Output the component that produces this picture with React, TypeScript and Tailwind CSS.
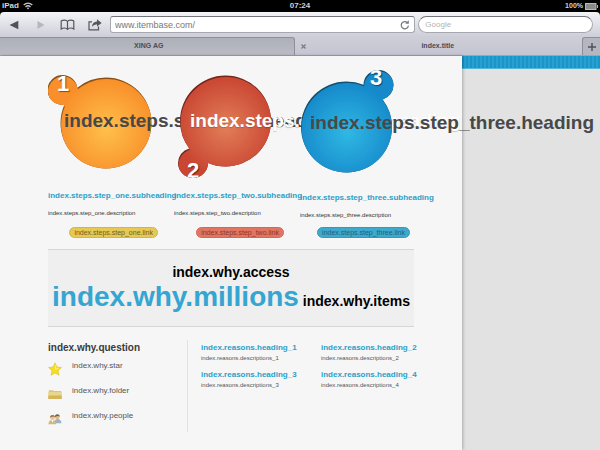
import React from "react";

type Circle = { x: number; y: number; r: number };

type Step = {
  id: string;
  number: string;
  big: Circle;
  small: Circle;
  label: { x: number; y: number };
  height: number;
  colors: { inner: string; outer: string; edge: string };
  headingClass: string;
  linkClass: string;
};

const steps: Step[] = [
  {
    id: "one",
    number: "1",
    big: { x: 58, y: 57, r: 45.5 },
    small: { x: 14.5, y: 24, r: 15 },
    label: { x: 9, y: 25 },
    height: 112,
    colors: { inner: "#ffc04c", outer: "#f88f29", edge: "#8a5016" },
    headingClass: "left-4 top-[43px] text-[#484848]",
    linkClass: "bg-[#e6c853] text-[#70601f] border-[#d5b640]",
  },
  {
    id: "two",
    number: "2",
    big: { x: 51.5, y: 55, r: 45.5 },
    small: { x: 19, y: 97, r: 15 },
    label: { x: 13, y: 112 },
    height: 112,
    colors: { inner: "#e27e58", outer: "#c94632", edge: "#74261c" },
    headingClass: "left-4 top-[43px] text-white [text-shadow:0_1px_1px_#00000030]",
    linkClass: "bg-[#e27562] text-[#8b3529] border-[#d96651]",
  },
  {
    id: "three",
    number: "3",
    big: { x: 46.5, y: 61, r: 45.5 },
    small: { x: 78.5, y: 19, r: 15 },
    label: { x: 70, y: 19 },
    height: 114,
    colors: { inner: "#30b8e4", outer: "#1689ca", edge: "#12506f" },
    headingClass: "left-2.5 top-[45px] text-[#484848]",
    linkClass: "bg-[#3da9cc] text-[#1d6180] border-[#2f9bbf]",
  },
];

const reasons = [1, 2, 3, 4];

function Blob({ step }: { step: Step }) {
  const { big, small, colors } = step;
  const shape = (
    <>
      <circle cx={big.x} cy={big.y} r={big.r} />
      <circle cx={small.x} cy={small.y} r={small.r} />
    </>
  );
  return (
    <svg width="126" height={step.height} className="block" aria-hidden="true">
      <defs>
        <radialGradient
          id={`fill-${step.id}`}
          gradientUnits="userSpaceOnUse"
          cx={big.x}
          cy={big.y + 4}
          r="50"
        >
          <stop offset="0" stopColor={colors.inner} />
          <stop offset="1" stopColor={colors.outer} />
        </radialGradient>
        <clipPath id={`clip-${step.id}`}>{shape}</clipPath>
        <filter id={`soft-${step.id}`}>
          <feGaussianBlur stdDeviation="0.7" />
        </filter>
      </defs>
      <g clipPath={`url(#clip-${step.id})`}>
        <rect width="126" height="116" fill={colors.edge} />
        <g
          fill={`url(#fill-${step.id})`}
          transform="translate(0.6 1.6)"
          filter={`url(#soft-${step.id})`}
        >
          {shape}
        </g>
        <text
          x={step.label.x}
          y={step.label.y}
          fill="#ffffff"
          className="text-[22px] font-bold [text-shadow:1px_1px_1px_#00000077]"
        >
          {step.number}
        </text>
      </g>
    </svg>
  );
}

function StepColumn({ step }: { step: Step }) {
  const name = `index.steps.step_${step.id}`;
  return (
    <li className="relative flex flex-col whitespace-nowrap">
      <Blob step={step} />
      <h2 className={`absolute text-[19px] leading-6 font-bold ${step.headingClass}`}>
        {name}.heading
      </h2>
      <h3 className="mt-3 w-0 text-[8px] leading-3 font-bold text-[#2ba0c8]">
        {name}.subheading
      </h3>
      <p className="mt-[7px] w-0 text-[6px] leading-[8px] text-[#333]">{name}.description</p>
      <a
        href="#"
        className={`mt-auto mr-4 self-end rounded-md border px-1 text-[7px] leading-[9px] ${step.linkClass}`}
      >
        {name}.link
      </a>
    </li>
  );
}

function StarIcon() {
  return (
    <svg width="14" height="14" viewBox="0 0 14 14" aria-hidden="true">
      <path
        d="M7 .8 8.9 5l4.6.5-3.4 3.1.9 4.6L7 10.9 3 13.2l.9-4.6L.5 5.5 5.1 5Z"
        fill="#f6dd20"
        stroke="#e3c63a"
        strokeWidth=".7"
      />
      <path d="M7 2.5 8.2 5.8l3 .4L7 8Z" fill="#fff06a" />
    </svg>
  );
}

function FolderIcon() {
  return (
    <svg width="14" height="14" viewBox="0 0 14 14" aria-hidden="true">
      <path d="M.8 4V3.2h4l1 .8h7.4v8H.8Z" fill="#dcc475" />
      <path d="M.3 5h13.4v7H.3Z" fill="#e8d68c" />
      <path d="M.3 8.5h13.4V12H.3Z" fill="#d5b557" />
    </svg>
  );
}

function PeopleIcon() {
  return (
    <svg width="14" height="14" viewBox="0 0 15 14" aria-hidden="true">
      <path d="M6.5 11.5Q7 6.8 10.2 7q3.6 0 4.3 4.5Z" fill="#9bb2c4" />
      <circle cx="10" cy="4.8" r="2.4" fill="#e0b78e" />
      <path d="M7.5 4.8Q7.4 2 10 2q2.7 0 2.5 2.7L10.6 3.6Z" fill="#765b3f" />
      <path d="M.5 12.5Q.7 8 4.5 8t4.3 4.5Z" fill="#d4b878" />
      <circle cx="4.8" cy="5.6" r="2.5" fill="#e8c69c" />
      <path d="M2.2 5.4Q2.1 2.8 4.9 2.7q2.7.1 2.6 2.7L5.7 4.3Z" fill="#987046" />
      <path d="m3.7 8.2 1 2.9 1.2-2.9Z" fill="#fff" />
    </svg>
  );
}

const whyItems = [
  { name: "star", Icon: StarIcon },
  { name: "folder", Icon: FolderIcon },
  { name: "people", Icon: PeopleIcon },
];

function StatusBar() {
  return (
    <div className="grid h-3 grid-cols-3 items-center bg-black px-0.5 text-[8px] leading-3 font-bold text-[#d4d4d4]">
      <div className="flex items-center gap-1">
        <span>iPad</span>
        <svg width="10" height="8" viewBox="0 0 10 8" fill="none" stroke="#c8c8c8" strokeWidth="1.3" aria-label="Wi-Fi">
          <path d="M.7 3.1Q5-.8 9.3 3.1M2.5 4.9Q5 2.7 7.5 4.9" />
          <path d="m3.8 6 1.2 1.5L6.2 6Q5 5.2 3.8 6Z" fill="#c8c8c8" stroke="none" />
        </svg>
      </div>
      <span className="text-center">07:24</span>
      <div className="flex items-center justify-end gap-0.5 text-[7px]">
        <span>100%</span>
        <svg width="13" height="7" viewBox="0 0 13 7" aria-label="Battery full">
          <rect x=".5" y=".5" width="10.5" height="6" fill="#8b8b8b" stroke="#b8b8b8" />
          <path d="M12 2h1v3h-1Z" fill="#b8b8b8" />
        </svg>
      </div>
    </div>
  );
}

function Toolbar() {
  return (
    <div className="flex h-[25px] items-center rounded-t bg-linear-to-b from-[#f4f4f7] to-[#cdced8] pr-[7px] pl-[9px]">
      <div className="flex w-[101px] items-center">
        <button type="button" aria-label="Back" className="mr-[18px]">
          <svg width="10" height="10" viewBox="0 0 10 10" className="block">
            <path d="M9.3.8v8.4L.5 5Z" fill="#505259" />
          </svg>
        </button>
        <button type="button" aria-label="Forward" className="mr-[15px]">
          <svg width="8" height="10" viewBox="0 0 8 10" className="block">
            <path d="M.5 1v8l7-4Z" fill="#b6b7be" />
          </svg>
        </button>
        <button type="button" aria-label="Bookmarks" className="mr-[13px]">
          <svg width="15" height="12" viewBox="0 0 15 12" className="block" fill="none" stroke="#54565e" strokeWidth="1.2">
            <path d="M7.5 2.5Q6.8 1.1 4.5 1.1T1.2 2v8Q2.6 9 4.5 9t3 1.3Q8.5 9 10.5 9t3.3 1V2Q12.8 1.1 10.5 1.1T7.5 2.5Zm0 0v8" />
          </svg>
        </button>
        <button type="button" aria-label="Share">
          <svg width="14" height="12" viewBox="0 0 14 12" className="block" fill="none" stroke="#54565e" strokeWidth="1.2">
            <path d="M4 2.8H1v8h9.5V7.5" />
            <path d="M4 7.8q.3-5 5-5.2V.3L13.6 4 9 7.5V5.2Q5.8 5.2 4 7.8Z" fill="#54565e" stroke="none" />
          </svg>
        </button>
      </div>
      <div className="flex h-[17px] flex-[307] items-center rounded-[3px] border border-[#a6a7af] border-t-[#73747b] bg-white px-1">
        <input
          aria-label="Address"
          defaultValue="www.itembase.com/"
          className="min-w-0 flex-1 bg-transparent text-[9px] leading-3 text-[#777] outline-none"
        />
        <button type="button" aria-label="Reload">
          <svg width="10" height="10" viewBox="0 0 10 10" className="block" fill="none" stroke="#777981" strokeWidth="1.2">
            <path d="M8.4 5.6A3.6 3.6 0 1 1 7.2 2.5" />
            <path d="M5.2 3.7h3.6V.3Z" fill="#777981" stroke="none" />
          </svg>
        </button>
      </div>
      <input
        type="search"
        aria-label="Search"
        placeholder="Google"
        className="ml-[3px] h-[17px] min-w-0 flex-[167] rounded-full border border-[#a6a7af] border-t-[#73747b] bg-white px-1.5 text-[8px] leading-3 outline-none placeholder:text-[#b3b3b3]"
      />
    </div>
  );
}

function TabBar() {
  return (
    <div className="flex h-[19px] border-b border-[#a2a4ad] bg-linear-to-b from-[#cdced8] to-[#c4c5d0] text-[7px] font-bold text-[#484b55]">
      <button
        type="button"
        className="flex-[290] rounded-tr-[3px] border-t border-r border-[#8e9099] bg-linear-to-b from-[#adb0b9] to-[#babcc5] pl-1"
      >
        XING AG
      </button>
      <div className="flex flex-[288] items-center">
        <button type="button" aria-label="Close tab" className="ml-1.5">
          <svg width="5" height="5" viewBox="0 0 5 5" className="block" stroke="#777a86" strokeWidth="1.2">
            <path d="m.5.5 4 4m0-4-4 4" />
          </svg>
        </button>
        <button type="button" className="mr-3 flex-1">
          index.title
        </button>
      </div>
      <button
        type="button"
        aria-label="New tab"
        className="flex w-[18px] items-center justify-center rounded-tl-[3px] border-t border-l border-[#8e9099] bg-[#b4b6c0]"
      >
        <svg width="8" height="8" viewBox="0 0 8 8" stroke="#50525b" strokeWidth="1.5">
          <path d="M4 0v8M0 4h8" />
        </svg>
      </button>
    </div>
  );
}

export default function App() {
  return (
    <div className="flex min-h-screen flex-col overflow-hidden bg-black font-['Liberation_Sans',Arial,sans-serif]">
      <header>
        <StatusBar />
        <Toolbar />
        <TabBar />
      </header>
      <div className="flex flex-1 bg-[#e2e2e2]">
        <main className="relative z-10 w-[77%] bg-[#f6f6f6] px-12 pt-2.5 pb-4 shadow-[1px_0_3px_#00000040]">
          <ul className="-mr-3 grid h-[172px] grid-cols-3">
            {steps.map((step) => (
              <StepColumn key={step.id} step={step} />
            ))}
          </ul>

          <section className="mt-[11px] border-y border-[#d6d6d6] bg-[#efefef] pt-3.5 pb-2 text-center text-[14px] font-bold whitespace-nowrap text-black">
            <p className="leading-4">index.why.access</p>
            <p className="leading-[34px]">
              <strong className="text-[28px] text-[#35a5d2]">index.why.millions</strong>{" "}
              index.why.items
            </p>
          </section>

          <div className="mt-[13px] flex whitespace-nowrap">
            <section className="h-[92px] w-[140px] border-r border-[#e2e2e2]">
              <h2 className="pt-0.5 text-[10px] leading-3 font-bold text-[#3b3b3b]">
                index.why.question
              </h2>
              <ul className="mt-1.5 flex flex-col gap-[9px]">
                {whyItems.map(({ name, Icon }) => (
                  <li key={name} className="flex h-4 items-end gap-2.5">
                    <Icon />
                    <span className="self-start text-[8px] leading-3 text-[#555]">
                      index.why.{name}
                    </span>
                  </li>
                ))}
              </ul>
            </section>
            <ul className="grid flex-1 grid-cols-2 content-start gap-x-[27px] gap-y-[7px] pt-0.5 pl-[13px]">
              {reasons.map((n) => (
                <li key={n}>
                  <h3 className="w-0 text-[8px] leading-3 font-bold text-[#2ba0c8]">
                    index.reasons.heading_{n}
                  </h3>
                  <p className="w-0 text-[6px] leading-[8px] text-[#555]">
                    index.reasons.descriptions_{n}
                  </p>
                </li>
              ))}
            </ul>
          </div>
        </main>
        <aside className="flex-1">
          <div className="h-[13px] border-b border-[#58b4d8] bg-[repeating-linear-gradient(90deg,#1b95c8_0_2px,#27a1d2_2px_4px)]" />
        </aside>
      </div>
    </div>
  );
}
